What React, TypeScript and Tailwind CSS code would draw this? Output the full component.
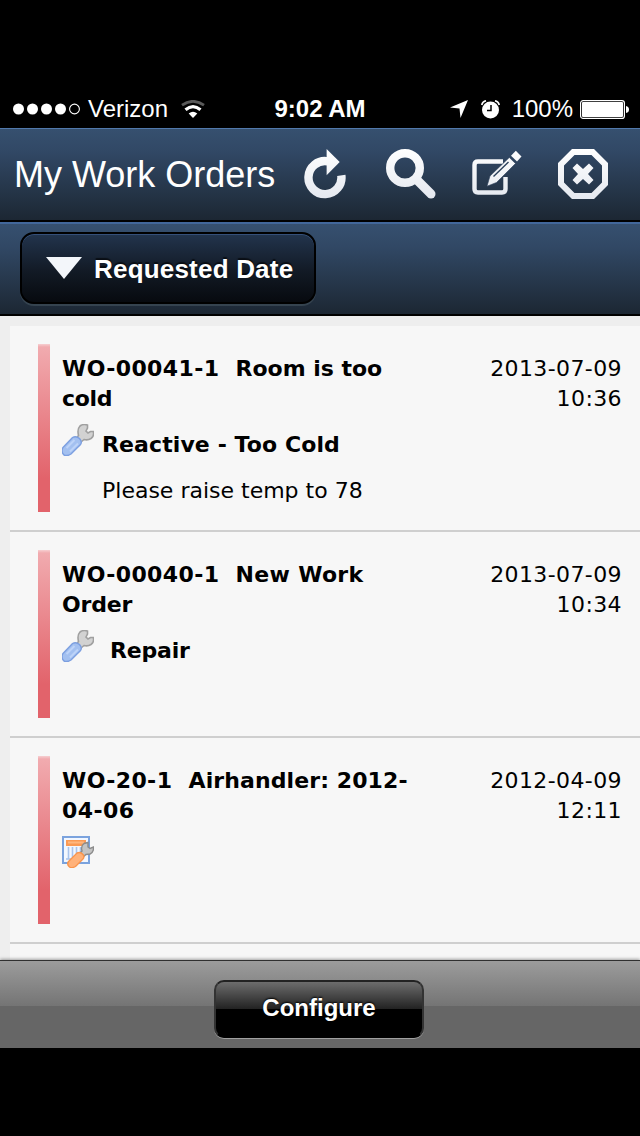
import React from 'react';

type OrderKind = 'reactive' | 'planned';

interface WorkOrder {
  id: string;
  title: string;
  titleRest: string;
  titleClass: string;
  restClass: string;
  date: string;
  time: string;
  kind: OrderKind;
  label?: string;
  labelClass?: string;
  note?: string;
}

const orders: WorkOrder[] = [
  {
    id: 'WO-00041-1',
    title: 'Room is too',
    titleRest: 'cold',
    titleClass: 'tracking-[-0.02px]',
    restClass: 'tracking-[-0.3px]',
    date: '2013-07-09',
    time: '10:36',
    kind: 'reactive',
    label: 'Reactive - Too Cold',
    labelClass: 'pl-2 tracking-[0.1px]',
    note: 'Please raise temp to 78',
  },
  {
    id: 'WO-00040-1',
    title: 'New Work',
    titleRest: 'Order',
    titleClass: 'tracking-[0.3px]',
    restClass: 'tracking-[-0.2px]',
    date: '2013-07-09',
    time: '10:34',
    kind: 'reactive',
    label: 'Repair',
    labelClass: 'pl-4 tracking-[-0.2px]',
  },
  {
    id: 'WO-20-1',
    title: 'Airhandler: 2012-',
    titleRest: '04-06',
    titleClass: 'tracking-[0.1px]',
    restClass: 'tracking-[0.4px]',
    date: '2012-04-09',
    time: '12:11',
    kind: 'planned',
  },
];

function IconGradient({ id }: { id: string }) {
  return (
    <defs>
      <linearGradient id={id} x1="0" y1="0" x2="0" y2="50" gradientUnits="userSpaceOnUse">
        <stop offset="0" stopColor="#ffffff" />
        <stop offset="1" stopColor="#e4e8ef" />
      </linearGradient>
    </defs>
  );
}

function RefreshIcon() {
  return (
    <svg width="44" height="50" viewBox="0 0 44 50" className="block">
      <IconGradient id="g-refresh" />
      <path d="M23.500 12.300 A16.500 16.500 0 1 0 37.300 26.300" fill="none" stroke="url(#g-refresh)" strokeWidth="8.4" />
      <path d="M22.600 0 L35.700 13 L22.600 26.300 Z" fill="url(#g-refresh)" />
    </svg>
  );
}

function SearchIcon() {
  return (
    <svg width="50" height="50" viewBox="0 0 50 50" className="block">
      <IconGradient id="g-search" />
      <circle cx="19" cy="19" r="14.8" fill="none" stroke="url(#g-search)" strokeWidth="8.4" />
      <path d="M30 30 L45 45" stroke="url(#g-search)" strokeWidth="9" strokeLinecap="round" />
    </svg>
  );
}

function EditIcon() {
  return (
    <svg width="50" height="50" viewBox="0 0 50 50" className="block">
      <IconGradient id="g-edit" />
      <path
        d="M31 12.500 H6 Q2.500 12.500 2.500 16 V40 Q2.500 43.500 6 43.500 H30 Q33.500 43.500 33.500 40 V28"
        fill="none"
        stroke="url(#g-edit)"
        strokeWidth="4.4"
      />
      <path d="M15 37.200 L18 27 L37.300 8.500 L43.500 14.500 L24.500 33.500 Z" fill="url(#g-edit)" stroke="#2b3f5a" strokeWidth="0.6" />
      <path d="M21.500 27.500 L36.500 13" stroke="#2b405b" strokeWidth="1.400" />
      <path d="M39 6.700 L43.800 1.700 L49.500 7.500 L45 12.500 Z" fill="url(#g-edit)" />
    </svg>
  );
}

function CloseIcon() {
  return (
    <svg width="50" height="50" viewBox="0 0 50 50" className="block">
      <IconGradient id="g-close" />
      <path
        fillRule="evenodd"
        fill="url(#g-close)"
        d="M14 0 H36 L50 14 V36 L36 50 H14 L0 36 V14 Z M16.500 6 L6 16.500 V33.500 L16.500 44 H33.500 L44 33.500 V16.500 L33.500 6 Z"
      />
      <path
        fill="url(#g-close)"
        d="M19 14.500 L25 20 L31 14.500 L35.500 19 L30 25 L35.500 31 L31 35.500 L25 30 L19 35.500 L14.500 31 L20 25 L14.500 19 Z"
      />
    </svg>
  );
}

function WrenchIcon() {
  return (
    <svg width="32" height="32" viewBox="0 0 32 32" className="block shrink-0">
      <path
        d="M14.500 14 L16.500 11.500 Q15 5 18 2 Q21 -0.300 25.500 1 L25.500 4 L24 7 L26 9 L28.500 7.500 L31.300 7.500 Q32.500 12 29 14.500 Q26 16.500 22 15.500 L19 18 Z"
        fill="#d2d2d2"
        stroke="#a0a0a0"
        strokeWidth="1.600"
      />
      <path d="M1 23.500 L10.500 13.500 Q14 11.500 17.500 14.500 Q20.500 18 18.500 20.500 L9 30 Q5.500 32.500 2 31 Q-1.500 27.500 1 23.500 Z" fill="#a3c0f0" stroke="#7c9fe0" strokeWidth="1.400" />
      <path d="M4.500 24 L12.500 16 M8 27.500 L16 19.500" stroke="#bdd3f8" strokeWidth="2" />
    </svg>
  );
}

function PlannedIcon() {
  return (
    <svg width="32" height="32" viewBox="0 0 32 32" className="block shrink-0">
      <rect x="1" y="1" width="26" height="26" fill="#f2f7ff" stroke="#7ba3de" strokeWidth="2" />
      <path d="M6.500 11 V23 M10.500 11 V23 M14.500 11 V20 M18.500 11 V16" stroke="#a9c4ec" strokeWidth="1.600" />
      <path d="M4 23 H12" stroke="#a9c4ec" strokeWidth="1.600" />
      <rect x="4" y="4" width="20" height="6" fill="#fb9a55" />
      <rect x="6" y="5.500" width="16" height="2" fill="#ffb780" />
      <path
        d="M17 18 L20 15 Q18.500 10 22 7.500 L26 6.500 L26 11 L28 12.500 L31.500 11 Q32 16 28 18 L24 18.500 L20 22 Z"
        fill="#c4c4c4"
        stroke="#8c8c8c"
        strokeWidth="1.400"
      />
      <path d="M6.500 25.500 L15 17 Q18.500 15.500 21 18.500 Q23 21 20.500 23.500 L13.500 30.500 Q10 32.500 7.500 31 Q4.500 28.500 6.500 25.500 Z" fill="#ffb27a" stroke="#fa954c" strokeWidth="1.400" />
    </svg>
  );
}

function StatusBar() {
  return (
    <div className="h-11 mt-[84px] flex items-center pl-[13px] pr-[11px] pt-1.5 text-white text-2xl leading-none font-['Liberation_Sans',sans-serif]">
      <div className="flex-1 flex items-center">
        <svg width="68" height="12" viewBox="0 0 68 12" className="block mr-[7px]">
          <g fill="#fff">
            <circle cx="5.500" cy="6" r="5.500" />
            <circle cx="19.500" cy="6" r="5.500" />
            <circle cx="33.500" cy="6" r="5.500" />
            <circle cx="47.500" cy="6" r="5.500" />
          </g>
          <circle cx="61.500" cy="6" r="4.900" fill="none" stroke="#fff" strokeWidth="1.100" />
        </svg>
        <span>Verizon</span>
        <svg width="24" height="19" viewBox="0 0 24 19" className="block ml-[13px]">
          <path d="M1 5.200 Q12 -2.500 23 5.200" fill="none" stroke="#5a5a5a" strokeWidth="2.800" />
          <path d="M4.500 9.700 Q12 3.500 19.500 9.700" fill="none" stroke="#fff" strokeWidth="3.200" />
          <path d="M12 18 L7.700 13.500 Q12 10 16.300 13.500 Z" fill="#fff" />
        </svg>
      </div>
      <span className="font-bold mr-0.5">9:02 AM</span>
      <div className="flex-1 flex items-center justify-end">
        <svg width="18" height="18" viewBox="0 0 18 18" className="block mr-[13px]">
          <path d="M18 0 L10.500 18 L9.500 8.500 L0 7.500 Z" fill="#fff" />
        </svg>
        <svg width="19" height="19" viewBox="0 0 19 19" className="block mr-3">
          <circle cx="9.500" cy="10" r="8.500" fill="#fff" />
          <path d="M0.700 5 Q1.500 1.500 5 0.800 M18.300 5 Q17.500 1.500 14 0.800" fill="none" stroke="#fff" strokeWidth="1.600" />
          <path d="M10 5 V10.500 H6" fill="none" stroke="#000" strokeWidth="1.500" />
        </svg>
        <span className="mr-[7px]">100%</span>
        <svg width="49" height="19" viewBox="0 0 49 19" className="block">
          <rect x="0.600" y="0.600" width="43.800" height="17.800" rx="2.500" fill="none" stroke="#fff" strokeWidth="1.200" />
          <rect x="2" y="2" width="41" height="15" rx="1" fill="#fff" />
          <path d="M46 6 Q49 6.500 49 9.500 Q49 12.500 46 13 Z" fill="#fff" />
        </svg>
      </div>
    </div>
  );
}

function OrderRow({ order }: { order: WorkOrder }) {
  return (
    <li className="h-[206px] shrink-0 flex border-b-2 border-[#cfcfcf] bg-[#f7f7f7] pl-7 pr-[18px] pt-[18px]">
      <div className="w-3 h-[168px] bg-[linear-gradient(#f6cfd1_0px,#f1abaf_3px,#e2636b_80%,#e2636b_100%)]" />
      <div className="flex-1 pl-3 pt-2.5">
        <div className="font-bold whitespace-nowrap">
          <span className="tracking-[0.4px]">{order.id}{'\u00a0 '}</span>
          <span className={order.titleClass}>{order.title}</span>
          <div className={order.restClass}>{order.titleRest}</div>
        </div>
        <div className="flex mt-2.5">
          {order.kind === 'reactive' ? <WrenchIcon /> : <PlannedIcon />}
          <div className={`font-bold whitespace-nowrap pt-1.5 ${order.labelClass ?? ''}`}>{order.label}</div>
        </div>
        {order.note && <div className="pl-10 mt-4 whitespace-nowrap">{order.note}</div>}
      </div>
      <div className="pt-2.5 text-right tracking-[0.4px]">
        <div>{order.date}</div>
        <div>{order.time}</div>
      </div>
    </li>
  );
}

export default function App() {
  return (
    <div className="w-[640px] h-[1136px] bg-black flex flex-col overflow-hidden">
      <StatusBar />

      <header className="h-[94px] shrink-0 flex items-center pl-3.5 pr-8 border-t border-t-[#5179ac] border-b-2 border-b-black bg-[linear-gradient(#36506f,#314865_25%,#1c2733)]">
        <h1 className="flex-1 text-4xl leading-none text-white whitespace-nowrap font-['Liberation_Sans',sans-serif]">My Work Orders</h1>
        <div className="flex items-center pb-0.5">
          <div className="mr-[38px]"><RefreshIcon /></div>
          <div className="mr-9"><SearchIcon /></div>
          <div className="mr-9"><EditIcon /></div>
          <CloseIcon />
        </div>
      </header>

      <div className="h-[94px] shrink-0 flex items-start pl-5 pt-[9px] border-t-2 border-t-[#42679a] border-b-2 border-b-black bg-[linear-gradient(#36506f,#314865_25%,#1c2733)]">
        <button className="w-[296px] h-[72px] -mt-px flex items-center pl-6 rounded-[14px] border-2 border-black bg-[linear-gradient(#22344d,#121a25_55%,#070a0f)] shadow-[inset_0_1px_0_#35507a,0_2px_0_#35434f]">
          <svg width="36" height="22" viewBox="0 0 36 22" className="block mr-3">
            <path d="M0 0 H36 L18 22 Z" fill="#f3f6fa" />
          </svg>
          <span className="pt-0.5 text-[26px] leading-none font-bold tracking-[0.2px] text-white whitespace-nowrap [text-shadow:0_-2px_1px_rgba(0,0,0,0.6)] font-['Liberation_Sans',sans-serif]">
            Requested Date
          </span>
        </button>
      </div>

      <main className="h-[644px] shrink-0 bg-[#eeeeee] pl-2.5 pt-2.5 overflow-hidden">
        <ul className="h-full bg-[#f7f7f7] flex flex-col text-[22px] leading-[30px] text-black font-['DejaVu_Sans',sans-serif]">
          {orders.map((order) => (
            <OrderRow key={order.id} order={order} />
          ))}
        </ul>
      </main>

      <footer className="h-[88px] shrink-0 flex justify-center items-start pt-[19px] pr-0.5 border-t border-t-[#303030] bg-[linear-gradient(#9c9c9c,#747474_52%,#666666_52%,#666666)] shadow-[0_-1px_3px_rgba(0,0,0,0.35)]">
        <button className="w-[210px] h-[58px] pb-0.5 rounded-[10px] border-2 border-t-[#222] border-x-[#333] border-b-black bg-[linear-gradient(#727272,#222222_50%,#000_50%,#000)] bg-origin-border shadow-[0_1px_0_#a0a0a0] text-white text-2xl leading-none font-bold [text-shadow:0_-1px_2px_#000] font-['Liberation_Sans',sans-serif]">
          Configure
        </button>
      </footer>
    </div>
  );
}
